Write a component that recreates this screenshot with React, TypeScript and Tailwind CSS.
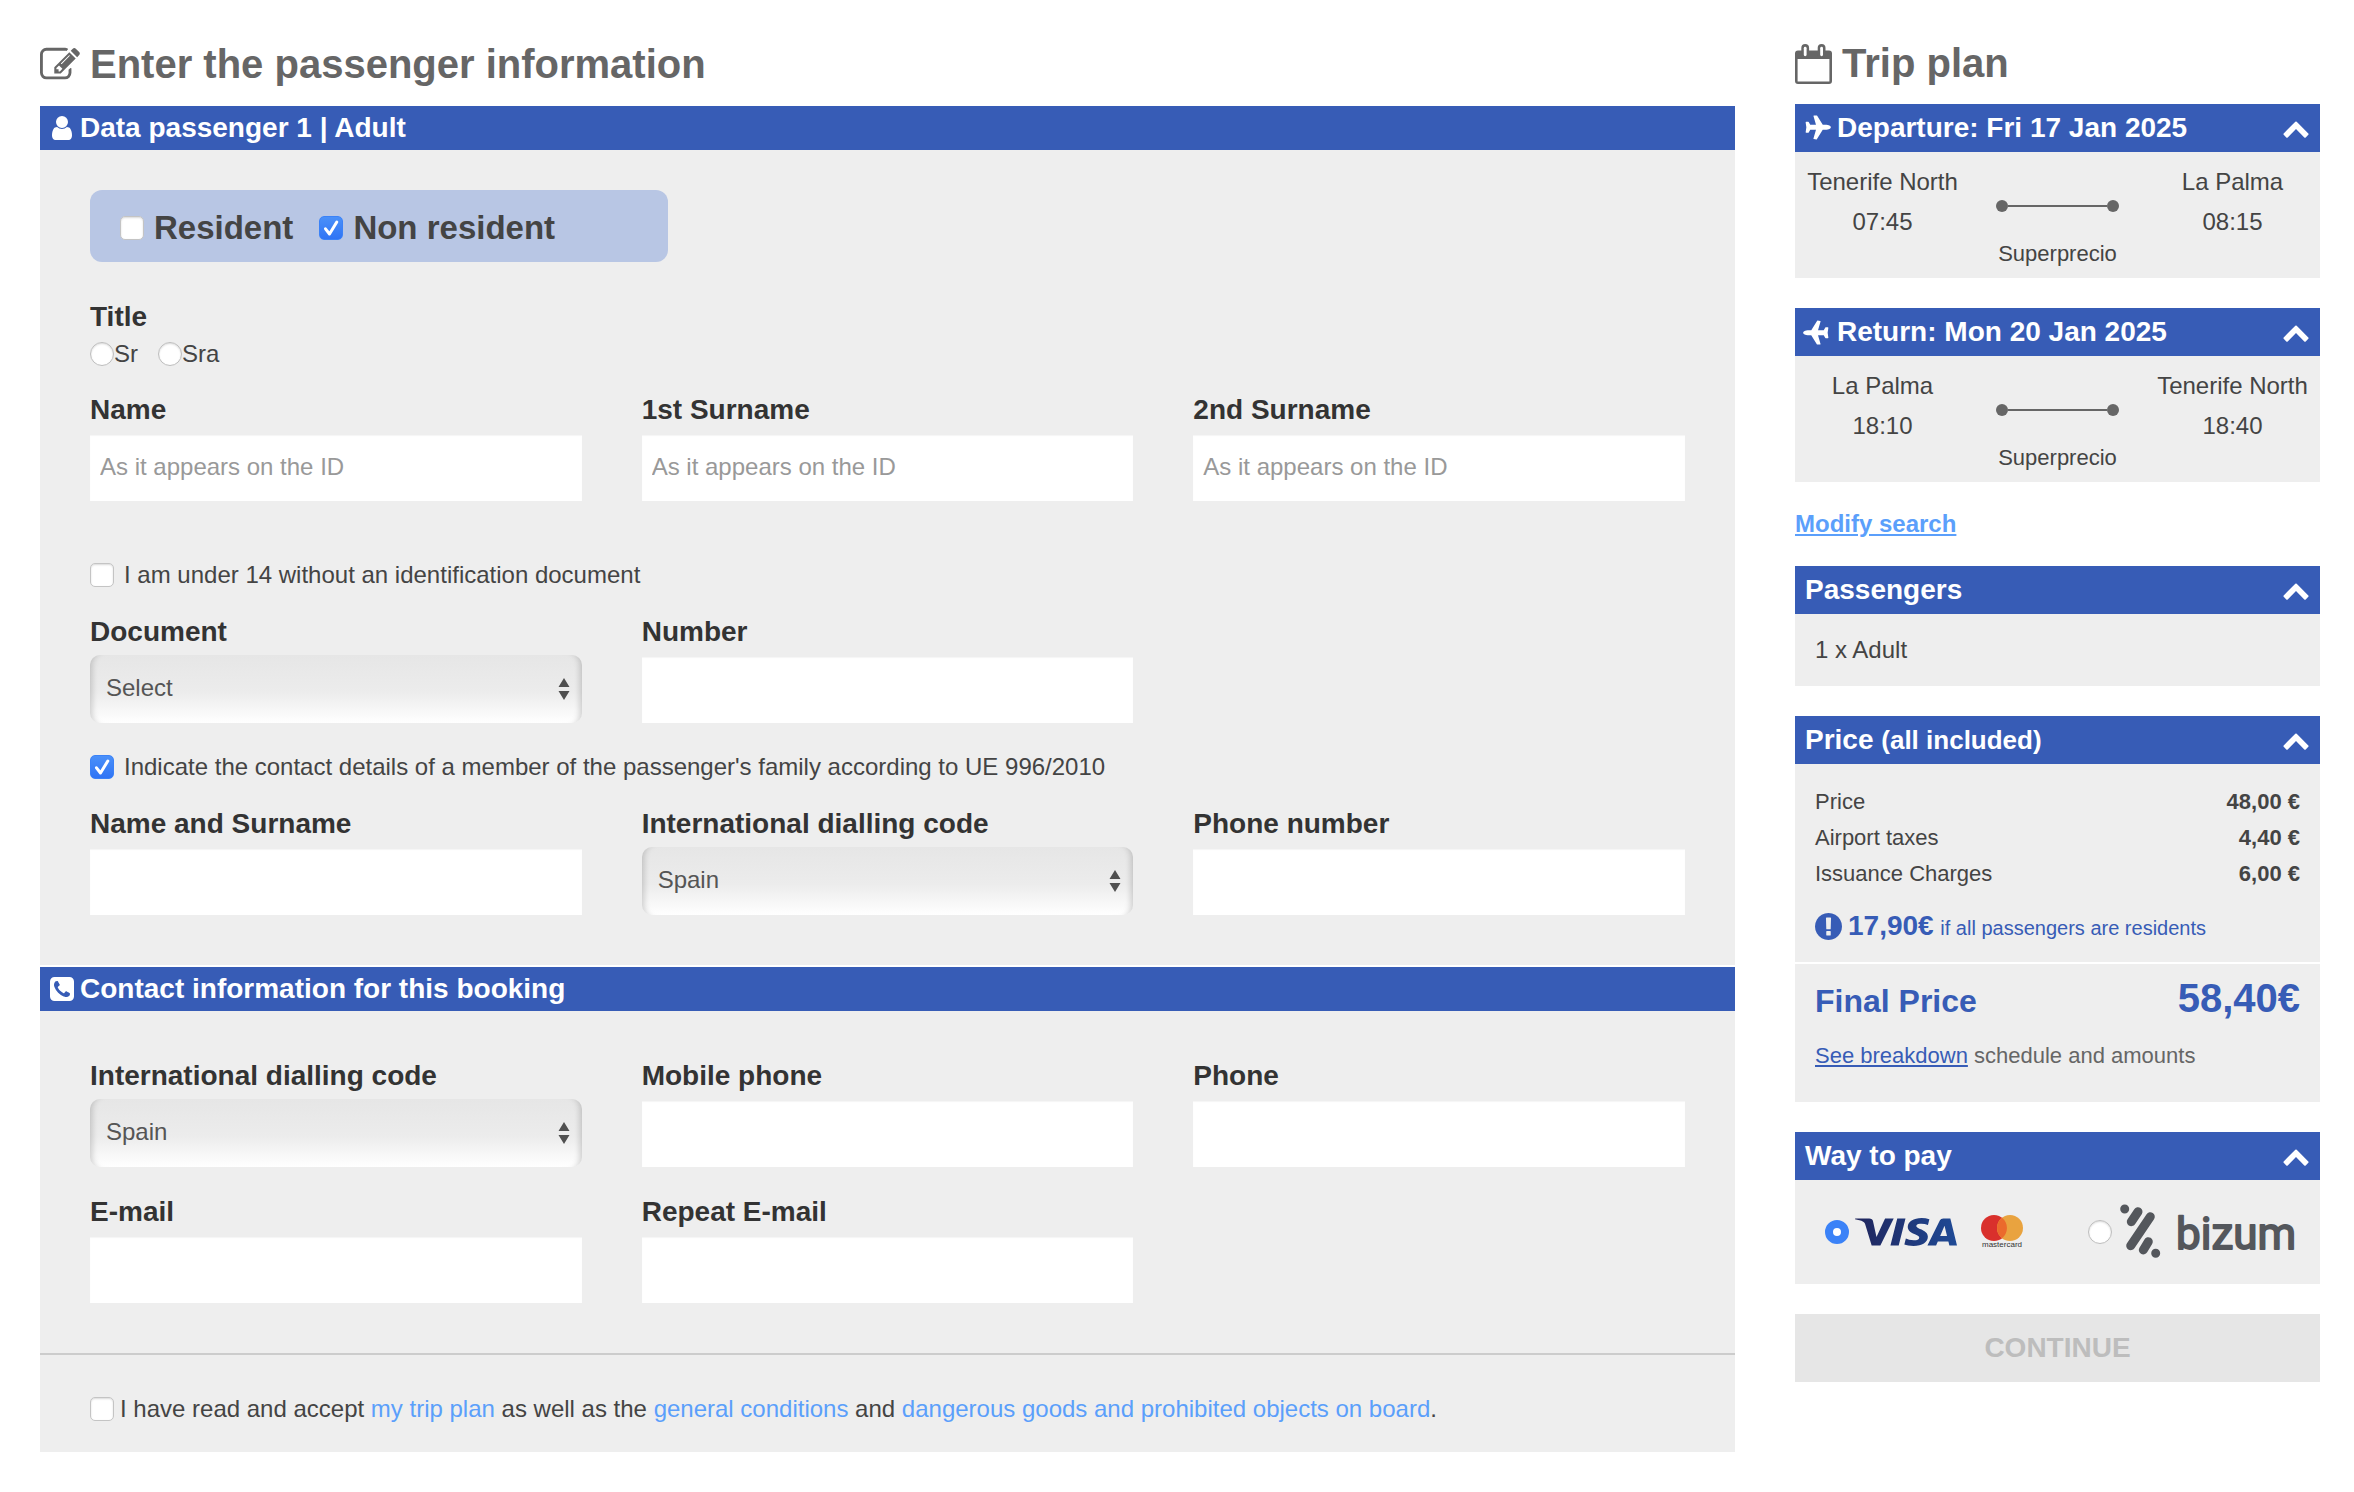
import { useId, type ReactNode } from "react";
import { SiVisa } from "react-icons/si";

const ICONS = {
  edit: "M888 1184l116-116-152-152-116 116v56h96v96h56zm440-720q-16-16-33 1l-350 350q-17 17-1 33t33-1l350-350q17-17 1-33zm80 594v190q0 119-84.5 203.5t-203.5 84.5h-832q-119 0-203.5-84.5t-84.5-203.5v-832q0-119 84.5-203.5t203.5-84.5h832q63 0 117 25 15 7 18 23 3 17-9 29l-49 49q-14 14-32 8-23-6-45-6h-832q-66 0-113 47t-47 113v832q0 66 47 113t113 47h832q66 0 113-47t47-113v-126q0-13 9-22l64-64q15-15 35-7t20 29zm-96-738l288 288-672 672h-288v-288zm444 132l-92 92-288-288 92-92q28-28 68-28t68 28l152 152q28 28 28 68t-28 68z",
  user: "M1536 1399q0 109-62.5 187t-150.5 78h-854q-88 0-150.5-78t-62.5-187q0-85 8.5-160.5t31.5-152 58.5-131 94-89 134.5-34.5q131 128 313 128t313-128q76 0 134.5 34.5t94 89 58.5 131 31.5 152 8.5 160.5zm-256-887q0 159-112.5 271.5t-271.5 112.5-271.5-112.5-112.5-271.5 112.5-271.5 271.5-112.5 271.5 112.5 112.5 271.5z",
  phone:
    "M1408 1193q0-11-2-16t-18-16.5-40.5-25-47.5-26.5-45.5-25-28.5-15q-5-3-19-13t-25-15-21-5q-15 0-36.5 20.5t-39.5 45-38.5 45-33.5 20.5q-7 0-16.5-3.5t-15.5-6.5-17-9.5-14-8.5q-99-55-170-126.5t-127-170.5q-2-3-8.5-14t-9.5-17-6.5-15.5-3.5-16.5q0-13 20.5-33.5t45-38.5 45-39.5 20.5-36.5q0-10-5-21t-15-25-13-19q-3-6-15-28.5t-25-45.5-26.5-47.5-25-40.5-16.5-18-16-2q-48 0-101 22-46 21-80 94.5t-34 130.5q0 16 2.5 34t5 30.5 9 33 10 29.5 12.5 33 11 30q60 164 216.5 320.5t320.5 216.5q6 2 30 11t33 12.5 29.5 10 33 9 30.5 5 34 2.5q57 0 130.5-34t94.5-80q22-53 22-101zm256-777v960q0 119-84.5 203.5t-203.5 84.5h-960q-119 0-203.5-84.5t-84.5-203.5v-960q0-119 84.5-203.5t203.5-84.5h960q119 0 203.5 84.5t84.5 203.5z",
  plane:
    "M1568 160q44 52 12 148t-108 172l-161 161 160 696q5 19-12 33l-128 96q-7 6-19 6-4 0-7-1-15-3-21-16l-279-508-259 259 53 194q5 17-8 31l-96 96q-9 9-23 9h-2q-15-2-24-13l-189-252-252-189q-11-7-13-23-1-13 9-25l96-97q9-9 23-9 6 0 8 1l194 53 259-259-508-279q-14-8-17-24-2-16 9-27l128-128q14-13 30-8l665 159 160-160q76-76 172-108t148 12z",
  chevronUp:
    "M1683 1331l-166 165q-19 19-45 19t-45-19l-531-531-531 531q-19 19-45 19t-45-19l-166-165q-19-19-19-45.5t19-45.5l742-741q19-19 45-19t45 19l742 741q19 19 19 45.5t-19 45.5z",
  alert:
    "M896 128q209 0 385.5 103t279.5 279.5 103 385.5-103 385.5-279.5 279.5-385.5 103-385.5-103-279.5-279.5-103-385.5 103-385.5 279.5-279.5 385.5-103zm128 1247v-190q0-14-9-23.5t-22-9.5h-192q-13 0-23 10t-10 23v190q0 13 10 23t23 10h192q13 0 22-9.5t9-23.5zm-2-344l18-621q0-12-10-18-10-8-24-8h-220q-14 0-24 8-10 6-10 18l17 621q0 10 10 17.5t24 7.5h185q14 0 23.5-7.5t10.5-17.5z",
};

type IconProps = { name: keyof typeof ICONS; className: string; viewBox?: string };

function Icon({ name, className, viewBox = "0 0 1792 1792" }: IconProps) {
  return (
    <svg viewBox={viewBox} fill="currentColor" aria-hidden="true" className={`shrink-0 overflow-visible ${className}`}>
      <path d={ICONS[name]} />
    </svg>
  );
}

function CalendarIcon() {
  return (
    <svg viewBox="0 0 37 40" aria-hidden="true" className="h-10 w-[37px] shrink-0">
      <path
        d="M3 6.500h31a3 3 0 0 1 3 3V37a3 3 0 0 1-3 3H3a3 3 0 0 1-3-3V9.500a3 3 0 0 1 3-3zM2.600 15v22.400h31.800V15z"
        fill="currentColor"
        fillRule="evenodd"
      />
      <rect x="6.300" y="0" width="7.800" height="14" rx="3.900" fill="currentColor" />
      <rect x="22.700" y="0" width="7.800" height="14" rx="3.900" fill="currentColor" />
      <rect x="8.800" y="2.800" width="2.800" height="9.400" rx="1.400" fill="#fff" />
      <rect x="25.200" y="2.800" width="2.800" height="9.400" rx="1.400" fill="#fff" />
    </svg>
  );
}

function Checkbox({ id, checked = false }: { id: string; checked?: boolean }) {
  return (
    <span className="relative flex size-6 shrink-0">
      <input
        id={id}
        type="checkbox"
        defaultChecked={checked}
        className="peer size-6 shrink-0 appearance-none rounded-[5px] border border-[#c4c4c4] bg-white shadow-[inset_0_1px_2px_rgba(0,0,0,0.15)] checked:border-[#3b82f7] checked:bg-[linear-gradient(#4a90f9,#2f74f5)] checked:shadow-none"
      />
      <svg viewBox="0 0 24 24" aria-hidden="true" className="pointer-events-none absolute inset-0 hidden peer-checked:block">
        <path d="M6.500 12.800l4 5.200L17.800 6" fill="none" stroke="#fff" strokeWidth="3" strokeLinecap="round" strokeLinejoin="round" />
      </svg>
    </span>
  );
}

type RadioProps = { id: string; name: string; label?: string; checked?: boolean };

function Radio({ id, name, label, checked = false }: RadioProps) {
  return (
    <input
      id={id}
      type="radio"
      name={name}
      aria-label={label}
      defaultChecked={checked}
      className="size-6 shrink-0 appearance-none rounded-full border border-[#bdbdbd] bg-white shadow-[inset_0_1px_2px_rgba(0,0,0,0.15)] checked:border-8 checked:border-[#3b82f7] checked:shadow-none"
    />
  );
}

function CheckRow({ label, checked }: { label: string; checked?: boolean }) {
  const id = useId();
  return (
    <div className="flex h-8 items-center gap-2.5">
      <Checkbox id={id} checked={checked} />
      <label htmlFor={id}>{label}</label>
    </div>
  );
}

function FieldLabel({ htmlFor, children }: { htmlFor: string; children: ReactNode }) {
  return (
    <label htmlFor={htmlFor} className="text-[28px] leading-[38px] font-bold text-[#333]">
      {children}
    </label>
  );
}

function TextField({ label, placeholder, type = "text" }: { label: string; placeholder?: string; type?: string }) {
  const id = useId();
  return (
    <div className="flex flex-col">
      <FieldLabel htmlFor={id}>{label}</FieldLabel>
      <input
        id={id}
        type={type}
        placeholder={placeholder}
        className="mt-1.5 h-[66px] w-full bg-white px-2.5 pb-0.5 text-2xl shadow-[inset_0_1px_1px_rgba(0,0,0,0.04)] placeholder:text-[#999]"
      />
    </div>
  );
}

function SelectField({ label, value }: { label: string; value: string }) {
  const id = useId();
  return (
    <div className="flex flex-col">
      <FieldLabel htmlFor={id}>{label}</FieldLabel>
      <div className="relative mt-1">
        <select
          id={id}
          className="h-[68px] w-full appearance-none rounded-[10px] bg-[linear-gradient(#e6e6e6,#ececec_55%,#fff)] px-4 pb-0.5 text-2xl text-[#555] shadow-[inset_8px_0_6px_-6px_rgba(0,0,0,0.18),inset_-8px_0_6px_-6px_rgba(0,0,0,0.18)]"
        >
          <option>{value}</option>
        </select>
        <svg viewBox="0 0 12 22" aria-hidden="true" className="pointer-events-none absolute top-[23px] right-3 h-[22px] w-3">
          <path d="M6 0l5.500 9H.5zM6 22L.5 13h11z" fill="#4f4f4f" />
        </svg>
      </div>
    </div>
  );
}

function FormBar({ icon, children }: { icon: "user" | "phone"; children: ReactNode }) {
  return (
    <h2 className="flex h-11 items-center gap-1 bg-[#375cb6] px-2 text-[28px] font-bold text-white">
      <Icon name={icon} className="size-7" />
      {children}
    </h2>
  );
}

function SideBar({ plane, children }: { plane?: "out" | "back"; children: ReactNode }) {
  return (
    <h2 className={`flex h-12 items-center gap-1.5 bg-[#375cb6] pr-2.5 text-[28px] font-bold text-white ${plane ? "pl-2" : "pl-2.5"}`}>
      {plane && (
        <Icon name="plane" viewBox="75 -75 1792 1792" className={plane === "out" ? "size-7 rotate-45" : "size-7 rotate-[225deg]"} />
      )}
      <span>{children}</span>
      <button type="button" aria-label="Collapse section" className="ml-auto">
        <Icon name="chevronUp" className="size-7" />
      </button>
    </h2>
  );
}

function Stop({ place, time }: { place: string; time: string }) {
  return (
    <div className="text-center leading-10">
      <p className="whitespace-nowrap">{place}</p>
      <p>{time}</p>
    </div>
  );
}

type FlightProps = { plane: "out" | "back"; title: string; from: [string, string]; to: [string, string] };

function Flight({ plane, title, from, to }: FlightProps) {
  return (
    <section>
      <SideBar plane={plane}>{title}</SideBar>
      <div className="grid grid-cols-3 bg-[#eee] pt-2.5 pb-1">
        <Stop place={from[0]} time={from[1]} />
        <div className="flex flex-col items-center gap-[22px] pt-[38px]">
          <div className="flex w-[123px] items-center">
            <span className="size-3 rounded-full bg-[#666]" />
            <span className="h-0.5 flex-1 bg-[#666]" />
            <span className="size-3 rounded-full bg-[#666]" />
          </div>
          <p className="text-[22px] leading-10">Superprecio</p>
        </div>
        <Stop place={to[0]} time={to[1]} />
      </div>
    </section>
  );
}

function VisaLogo() {
  return (
    <span className="shrink-0">
      <svg aria-hidden="true" className="absolute size-0">
        <linearGradient id="visa-blue" x1="0" x2="1">
          <stop offset="0" stopColor="#20255c" />
          <stop offset="1" stopColor="#1f4a96" />
        </linearGradient>
      </svg>
      <SiVisa aria-hidden="true" viewBox="0 8.100 24 7.800" preserveAspectRatio="none" fill="url(#visa-blue)" className="h-7 w-[102px]" />
    </span>
  );
}

function MastercardLogo() {
  return (
    <svg viewBox="0 0 42 34" aria-hidden="true" className="h-[34px] w-[42px] shrink-0">
      <circle cx="13" cy="13" r="13" fill="#d9302c" />
      <circle cx="29" cy="13" r="13" fill="#e9a33f" />
      <path d="M21 2.800a13 13 0 0 1 0 20.400a13 13 0 0 1 0-20.400z" fill="#eb6a2c" />
      <text x="21" y="32" textAnchor="middle" fontSize="8" fill="#333">
        mastercard
      </text>
    </svg>
  );
}

function BizumLogo() {
  return (
    <svg viewBox="0 0 178 56" aria-hidden="true" className="h-14 w-[178px] shrink-0">
      <g fill="none" stroke="#54575c" strokeLinecap="round" strokeWidth="9">
        <path d="M4.700 5v.01M18 7.700l-6.700 10M30.300 12.700L10.700 41.700M28.300 37.700l-5 8.300M35.700 49.300v.01" />
      </g>
      <text
        x="56"
        y="45"
        fontSize="44"
        fontFamily="Roboto, sans-serif"
        fill="#54575c"
        stroke="#54575c"
        strokeWidth="1.800"
        strokeLinejoin="round"
      >
        bizum
      </text>
    </svg>
  );
}

const PRICES = [
  ["Price", "48,00 €"],
  ["Airport taxes", "4,40 €"],
  ["Issuance Charges", "6,00 €"],
];

export default function App() {
  return (
    <div className="flex items-start gap-[60px] bg-white pt-6 pr-[34px] pb-10 pl-10 font-['Liberation_Sans',Arial,sans-serif] text-2xl text-[#444]">
      <form className="min-w-0 flex-1">
        <h1 className="flex h-[82px] items-center gap-2.5 text-[40px] font-bold text-[#666]">
          <Icon name="edit" className="size-10" />
          Enter the passenger information
        </h1>
        <section className="mb-0.5">
          <FormBar icon="user">Data passenger 1 | Adult</FormBar>
          <div className="bg-[#eee] px-[50px] pt-10 pb-[50px]">
            <div className="flex h-[72px] w-[578px] items-center gap-[26px] rounded-xl bg-[#b8c6e4] px-[30px] pt-1 text-[33px] font-bold">
              <div className="flex items-center gap-2.5">
                <Checkbox id="resident" />
                <label htmlFor="resident">Resident</label>
              </div>
              <div className="flex items-center gap-2.5">
                <Checkbox id="non-resident" checked />
                <label htmlFor="non-resident">Non resident</label>
              </div>
            </div>
            <fieldset className="mt-9">
              <legend className="text-[28px] leading-[38px] font-bold text-[#333]">Title</legend>
              <div className="mt-0.5 flex h-8 items-center gap-5">
                <div className="flex items-center">
                  <Radio id="sr" name="title" />
                  <label htmlFor="sr">Sr</label>
                </div>
                <div className="flex items-center">
                  <Radio id="sra" name="title" />
                  <label htmlFor="sra">Sra</label>
                </div>
              </div>
            </fieldset>
            <div className="mt-[21px] grid grid-cols-3 gap-x-[60px]">
              <TextField label="Name" placeholder="As it appears on the ID" />
              <TextField label="1st Surname" placeholder="As it appears on the ID" />
              <TextField label="2nd Surname" placeholder="As it appears on the ID" />
            </div>
            <div className="mt-[58px]">
              <CheckRow label="I am under 14 without an identification document" />
            </div>
            <div className="mt-[22px] grid grid-cols-3 gap-x-[60px]">
              <SelectField label="Document" value="Select" />
              <TextField label="Number" />
            </div>
            <div className="mt-7">
              <CheckRow label="Indicate the contact details of a member of the passenger's family according to UE 996/2010" checked />
            </div>
            <div className="mt-[22px] grid grid-cols-3 gap-x-[60px]">
              <TextField label="Name and Surname" />
              <SelectField label="International dialling code" value="Spain" />
              <TextField label="Phone number" type="tel" />
            </div>
          </div>
        </section>
        <section>
          <FormBar icon="phone">Contact information for this booking</FormBar>
          <div className="grid grid-cols-3 gap-x-[60px] gap-y-[26px] bg-[#eee] px-[50px] pt-[46px] pb-[50px]">
            <SelectField label="International dialling code" value="Spain" />
            <TextField label="Mobile phone" type="tel" />
            <TextField label="Phone" type="tel" />
            <TextField label="E-mail" type="email" />
            <TextField label="Repeat E-mail" type="email" />
          </div>
        </section>
        <div className="flex items-center gap-1.5 border-t-2 border-[#ccc] bg-[#eee] px-[50px] pt-[38px] pb-[27px]">
          <Checkbox id="accept" />
          <label htmlFor="accept" className="leading-8">
            I have read and accept{" "}
            <a href="#trip-plan" className="text-[#5b9ffb]">my trip plan</a> as well as the{" "}
            <a href="#conditions" className="text-[#5b9ffb]">general conditions</a> and{" "}
            <a href="#dangerous-goods" className="text-[#5b9ffb]">dangerous goods and prohibited objects on board</a>.
          </label>
        </div>
      </form>

      <aside className="w-[525px] shrink-0">
        <h1 className="flex h-20 items-center gap-2.5 text-[40px] font-bold text-[#666]">
          <CalendarIcon />
          Trip plan
        </h1>
        <div className="flex flex-col gap-[30px]">
          <Flight plane="out" title="Departure: Fri 17 Jan 2025" from={["Tenerife North", "07:45"]} to={["La Palma", "08:15"]} />
          <Flight plane="back" title="Return: Mon 20 Jan 2025" from={["La Palma", "18:10"]} to={["Tenerife North", "18:40"]} />
        </div>
        <p className="my-[22px] leading-10">
          <a href="#search" className="font-bold text-[#5b9ffb] underline">Modify search</a>
        </p>
        <div className="flex flex-col gap-[30px]">
          <section>
            <SideBar>Passengers</SideBar>
            <p className="bg-[#eee] px-5 leading-[72px]">1 x Adult</p>
          </section>
          <section>
            <SideBar>
              Price <span className="text-[26px]">(all included)</span>
            </SideBar>
            <div className="bg-[#eee] px-5 pt-5 pb-[18px]">
              <table className="w-full text-[22px] leading-9">
                <tbody>
                  {PRICES.map(([label, amount]) => (
                    <tr key={label}>
                      <th scope="row" className="p-0 text-left font-normal">{label}</th>
                      <td className="p-0 text-right font-bold">{amount}</td>
                    </tr>
                  ))}
                </tbody>
              </table>
              <p className="mt-4 flex h-9 items-center gap-1.5 text-[#375cb6]">
                <Icon name="alert" viewBox="128 128 1536 1536" className="size-[27px]" />
                <span>
                  <strong className="text-[28px]">17,90€</strong> <span className="text-xl">if all passengers are residents</span>
                </span>
              </p>
            </div>
            <div className="mt-0.5 bg-[#eee] px-5 pt-2 pb-7">
              <div className="flex h-[50px] items-baseline justify-between font-bold text-[#375cb6]">
                <span className="text-[32px]">Final Price</span>
                <span className="text-[40px]">58,40€</span>
              </div>
              <p className="mt-4 text-[22px] leading-9 text-[#666]">
                <a href="#breakdown" className="text-[#375cb6] underline">See breakdown</a> schedule and amounts
              </p>
            </div>
          </section>
          <section>
            <SideBar>Way to pay</SideBar>
            <div className="flex h-[104px] items-center justify-between bg-[#eee] pr-[22px] pl-[30px]">
              <div className="flex items-center gap-1.5">
                <Radio id="card" name="payment" label="Visa or Mastercard" checked />
                <label htmlFor="card" className="flex items-center gap-6">
                  <VisaLogo />
                  <MastercardLogo />
                </label>
              </div>
              <div className="flex items-center gap-2">
                <Radio id="bizum" name="payment" label="Bizum" />
                <label htmlFor="bizum">
                  <BizumLogo />
                </label>
              </div>
            </div>
          </section>
          <button type="submit" disabled className="h-[68px] w-full bg-[#e6e6e6] text-[28px] font-bold text-[#bdbdbd]">
            CONTINUE
          </button>
        </div>
      </aside>
    </div>
  );
}
